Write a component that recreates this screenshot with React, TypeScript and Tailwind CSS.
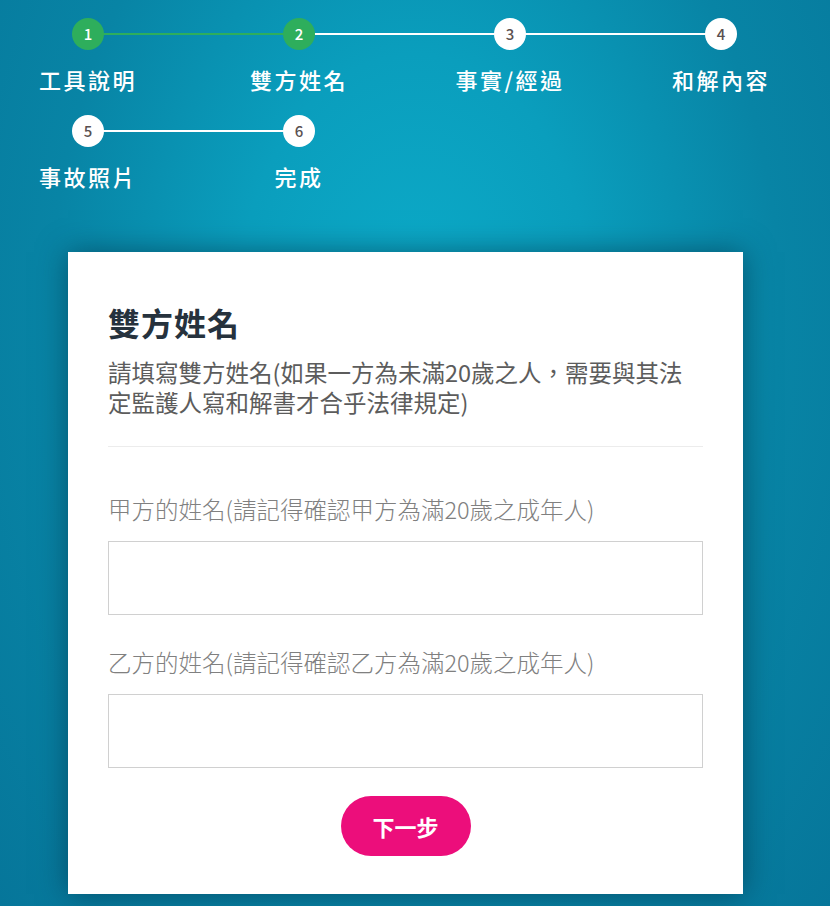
import React from 'react';

type Step = { n: number; label: string; done: boolean; line?: 'green' | 'white' };

const rowOne: Step[] = [
  { n: 1, label: '工具說明', done: true, line: 'green' },
  { n: 2, label: '雙方姓名', done: true, line: 'white' },
  { n: 3, label: '事實/經過', done: false, line: 'white' },
  { n: 4, label: '和解內容', done: false },
];

const rowTwo: Step[] = [
  { n: 5, label: '事故照片', done: false, line: 'white' },
  { n: 6, label: '完成', done: false },
];

const font = { fontFamily: '"Noto Sans CJK TC", "Noto Sans", sans-serif' };

const StepItem = ({ step }: { step: Step }) => (
  <div className="relative w-[160px] flex flex-col items-center">
    {step.line && (
      <div
        className={`absolute top-[15px] left-1/2 w-[211px] h-[2px] ${
          step.line === 'green' ? 'bg-[#2eae5c]' : 'bg-white'
        }`}
      />
    )}
    <div
      className={`relative z-10 w-8 h-8 rounded-full flex items-center justify-center text-[15px] font-medium ${
        step.done ? 'bg-[#2eae5c] text-white' : 'bg-white text-[#5a5050]'
      }`}
    >
      {step.n}
    </div>
    <div className="mt-[14px] h-[30px] leading-[30px] text-[22px] font-medium tracking-[2.5px] text-white whitespace-nowrap">
      {step.label}
    </div>
  </div>
);

const Field = ({ label }: { label: string }) => (
  <div className="flex flex-col">
    <label className="text-[23.5px] leading-[32px] font-light text-[#808080]">{label}</label>
    <input
      type="text"
      className="mt-4 h-[74px] w-full border border-[#d0d0d0] bg-white px-3 text-[20px] outline-none"
    />
  </div>
);

export default function App() {
  return (
    <div
      className="min-h-[906px] w-full overflow-hidden bg-[radial-gradient(ellipse_at_50%_34%,#0cabc9_0%,#0a9ebd_30%,#0884a5_62%,#06769a_100%)]"
      style={font}
    >
      {/* Progress steps */}
      <div className="pt-[18px] pl-[8px] flex flex-col gap-[21px]">
        <div className="flex gap-[51px]">
          {rowOne.map((s) => (
            <StepItem key={s.n} step={s} />
          ))}
        </div>
        <div className="flex gap-[51px]">
          {rowTwo.map((s) => (
            <StepItem key={s.n} step={s} />
          ))}
        </div>
      </div>

      {/* Form card */}
      <div className="mt-[61px] ml-[68px] w-[675px] bg-white px-10 pt-[50px] pb-[38px] shadow-[0_0_28px_rgba(0,40,60,0.55)]">
        <h2 className="text-[32px] leading-[40px] font-bold tracking-[1px] text-[#26323d]">雙方姓名</h2>
        <p className="mt-[15px] text-[23.5px] leading-[30px] text-[#5c5c5c]">
          請填寫雙方姓名(如果一方為未滿20歲之人，需要與其法定監護人寫和解書才合乎法律規定)
        </p>
        <div className="mt-[29px] border-t border-[#ececec]" />

        <div className="mt-[46px] flex flex-col gap-[31px]">
          <Field label="甲方的姓名(請記得確認甲方為滿20歲之成年人)" />
          <Field label="乙方的姓名(請記得確認乙方為滿20歲之成年人)" />
        </div>

        <div className="mt-[28px] flex justify-center">
          <button className="h-[60px] w-[130px] rounded-full bg-[#ec0e7b] text-[22px] font-bold text-white">
            下一步
          </button>
        </div>
      </div>
    </div>
  );
}
